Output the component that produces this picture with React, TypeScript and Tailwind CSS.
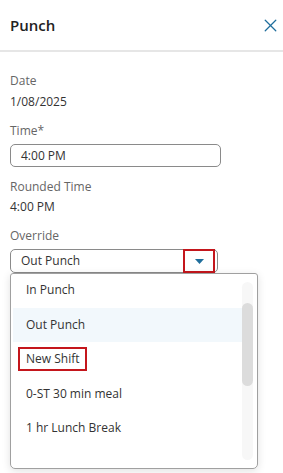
import { X } from 'lucide-react';

const options = ['In Punch', 'Out Punch', 'New Shift', '0-ST 30 min meal', '1 hr Lunch Break'];

export default function App() {
  return (
    <div className="w-[283px] h-[473px] bg-white overflow-hidden font-['Open_Sans',sans-serif] text-[#333]">
      {/* Header */}
      <header className="flex items-center justify-between h-[52px] pl-[10px] pr-[2px] border-b-2 border-[#e6e6e6]">
        <h1 className="text-[15px] font-semibold text-[#222]">Punch</h1>
        <X className="h-[21px] w-[21px] text-[#1f6e9c]" strokeWidth={1.5} />
      </header>

      <div className="px-[10px] pt-[20px] text-[12px]">
        <div className="text-[#666] leading-[18px]">Date</div>
        <div className="mt-[3px] leading-[18px]">1/08/2025</div>

        <div className="mt-[11px] text-[#666] leading-[18px]">Time*</div>
        <div className="mt-[4px] w-[211px] h-[23px] flex items-center pl-[10px] border border-[#8a8a8a] rounded-[5px]">
          4:00 PM
        </div>

        <div className="mt-[11px] text-[#666] leading-[18px]">Rounded Time</div>
        <div className="mt-[2px] leading-[18px]">4:00 PM</div>

        <div className="mt-[11px] text-[#666] leading-[18px]">Override</div>
        <div className="relative mt-[4px] w-[208px] h-[24px] flex items-center pl-[10px] border border-[#8a8a8a] rounded-[5px]">
          Out Punch
          <div className="absolute right-[2px] top-[-1px] w-[32px] h-[24px] border-2 border-[#c4161c] flex items-center justify-center">
            <svg width="9" height="5" viewBox="0 0 9 5">
              <path d="M0 0h9L4.5 5z" fill="#1f6e9c" />
            </svg>
          </div>
        </div>

        {/* Dropdown list */}
        <div className="relative w-[248px] h-[196px] border border-[#a0a0a0] rounded-b-[5px] rounded-t-[3px] shadow-[0_2px_8px_rgba(0,0,0,0.12)] flex">
          <ul className="flex-1 pl-[2px] -mt-[1px]">
            {options.map((o) => (
              <li
                key={o}
                className={`h-[34.5px] flex items-center pl-[13px] ${o === 'Out Punch' ? 'bg-[#f2f8fc]' : ''}`}
              >
                {o === 'New Shift' ? (
                  <span className="-ml-[8px] px-[6px] h-[24px] flex items-center border-2 border-[#c4161c]">{o}</span>
                ) : (
                  o
                )}
              </li>
            ))}
          </ul>
          <div className="w-[11px] mr-[4px] my-[8px] bg-[#f7f7f7] rounded-full flex flex-col">
            <div className="mt-[21px] h-[83px] bg-[#dcdcdc] rounded-full" />
          </div>
        </div>
      </div>
    </div>
  );
}
